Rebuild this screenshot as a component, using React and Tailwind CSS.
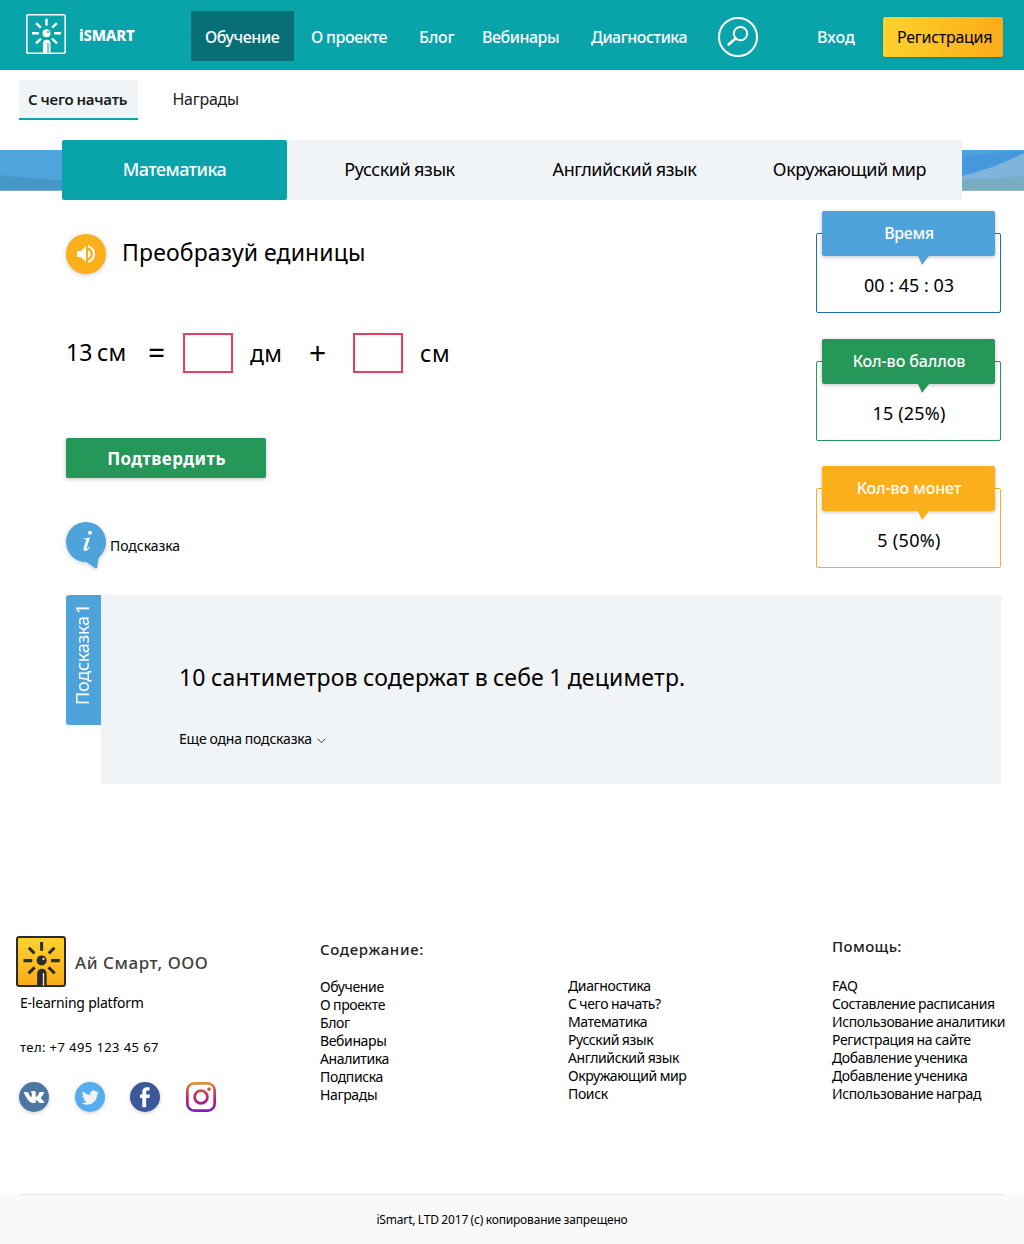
import React from 'react';

const navLinks = [
  { label: 'О проекте', cls: 'w-[108px] tracking-[-0.4px]' },
  { label: 'Блог', cls: 'w-[63px] tracking-[-0.23px]' },
  { label: 'Вебинары', cls: 'w-[109px] tracking-[-0.47px]' },
  { label: 'Диагностика', cls: 'w-[127px] tracking-[-0.5px]' },
];

const subjects = ['Русский язык', 'Английский язык', 'Окружающий мир'];

const stats = [
  {
    title: 'Время',
    value: '00 : 45 : 03',
    border: 'border-[#1c70a8]',
    bg: 'bg-[#4fa3db]',
    tail: 'border-t-[#4fa3db]',
    gap: 'mb-[26px]',
    track: 'tracking-[-0.35px]',
    valueTrack: '',
  },
  {
    title: 'Кол-во баллов',
    value: '15 (25%)',
    border: 'border-[#259759]',
    bg: 'bg-[#259759]',
    tail: 'border-t-[#259759]',
    gap: 'mb-[25px]',
    track: 'tracking-[-0.1px]',
    valueTrack: 'tracking-[0.18px]',
  },
  {
    title: 'Кол-во монет',
    value: '5 (50%)',
    border: 'border-[#fbaf1a]',
    bg: 'bg-[#fbaf1a]',
    tail: 'border-t-[#fbaf1a]',
    gap: '',
    track: 'tracking-[-0.12px]',
    valueTrack: 'tracking-[0.3px]',
  },
];

const contentLinks = ['Обучение', 'О проекте', 'Блог', 'Вебинары', 'Аналитика', 'Подписка', 'Награды'];
const moreLinks = ['Диагностика', 'С чего начать?', 'Математика', 'Русский язык', 'Английский язык', 'Окружающий мир', 'Поиск'];
const helpLinks = [
  'FAQ',
  'Составление расписания',
  'Использование аналитики',
  'Регистрация на сайте',
  'Добавление ученика',
  'Добавление ученика',
  'Использование наград',
];

function LogoMark({ className, stroke, fill, shine }) {
  return (
    <svg className={className} viewBox="0 0 40 40" fill="none" preserveAspectRatio="none">
      <defs>
        <linearGradient id="logoFill" x1="0" y1="0" x2="0" y2="1">
          <stop offset="0" stopColor="#fdd32b" />
          <stop offset="1" stopColor="#fbab18" />
        </linearGradient>
      </defs>
      <rect x="0.8" y="0.8" width="38.4" height="38.4" rx="1.8" fill={fill} stroke={stroke} strokeWidth="1.6" />
      <path
        d="M20.5 4.8v6.7M6 19.3h7M28 19.3h7M10.2 9.2l4.6 4.5M30.8 9.2l-4.6 4.5M10 29.3l5-4.6M31 29.3l-5-4.6"
        stroke={stroke}
        strokeWidth="2.4"
      />
      <circle cx="20.5" cy="19.2" r="4" fill={stroke} />
      <circle cx="22" cy="18" r="0.9" fill={shine} />
      <path d="M16.9 39V29.5a3.8 3.8 0 0 1 7.6 0V39z" fill={stroke} />
      <path d="M22 29v10" stroke={shine} strokeWidth="1.1" />
    </svg>
  );
}

function Header() {
  return (
    <header className="flex h-[70px] bg-[#09a3aa] text-base font-medium text-white">
      <LogoMark className="mt-[14px] ml-[26px] size-10 shrink-0" stroke="#ffffff" fill="none" shine="#09a3aa" />
      <span className="ml-[13px] w-[112px] text-[15px] leading-[70px] font-extrabold tracking-[-0.2px]">iSMART</span>
      <a className="mt-[11px] h-[50px] w-[103px] bg-[#076f75] pl-[14px] leading-[53px] tracking-[-0.44px]">Обучение</a>
      <nav className="ml-[17px] flex leading-[75px] [word-spacing:-0.5px]">
        {navLinks.map((l) => (
          <a key={l.label} className={l.cls}>
            {l.label}
          </a>
        ))}
      </nav>
      <button className="mt-[17px] size-10 shrink-0">
        <svg viewBox="0 0 40 40" fill="none" stroke="#ffffff">
          <circle cx="20" cy="20" r="19" strokeWidth="2" />
          <circle cx="22.5" cy="16.6" r="6.7" strokeWidth="2" />
          <path d="M17.6 21.5l-7 6" strokeWidth="2.6" strokeLinecap="round" />
        </svg>
      </button>
      <a className="ml-[59px] w-[66px] leading-[75px]">Вход</a>
      <button className="mt-[17px] h-10 w-[120px] rounded-[2px] bg-linear-to-r from-[#fcd22b] to-[#fbac18] pl-[14px] text-left leading-[40px] font-normal tracking-[-0.27px] text-black shadow-[0_1px_3px_rgba(0,0,0,0.2)]">
        <span className="block h-[39px] leading-[39px]">Регистрация</span>
      </button>
    </header>
  );
}

function SubNav() {
  return (
    <div className="flex h-[70px] pt-[10px] text-[#1c1c1c]">
      <a className="ml-[19px] h-10 w-[119px] border-b-2 border-[#09a3aa] bg-[#f0f4f7] pl-[9px] text-[15px] leading-[38px] font-semibold tracking-[-0.25px] [word-spacing:-0.5px]">
        С чего начать
      </a>
      <a className="ml-[34.5px] text-base leading-[39px] tracking-[-0.27px]">Награды</a>
    </div>
  );
}

function SubjectTabs() {
  return (
    <div className="flex">
      <svg className="mt-[10px] h-[41px] w-[62px]" viewBox="0 0 62 41" preserveAspectRatio="none">
        <rect width="62" height="41" fill="#4fa4dc" />
        <path d="M0 25q30 4 62 5v11H0z" fill="#4597c8" />
        <rect y="40" width="62" height="1" fill="#86aebf" />
      </svg>
      <div className="grid h-[60px] w-[900px] grid-cols-4 rounded-[2px] bg-[#f0f4f7] text-center text-lg leading-[59px] tracking-[-0.42px] text-black [word-spacing:-0.5px]">
        <a className="rounded-[2px] bg-[#09a3aa] font-medium tracking-[-0.58px] text-white">Математика</a>
        {subjects.map((s) => (
          <a key={s}>{s}</a>
        ))}
      </div>
      <svg className="mt-[10px] h-[41px] w-[62px]" viewBox="0 0 62 41" preserveAspectRatio="none">
        <rect width="62" height="41" fill="#4698dd" />
        <path d="M0 0h62v1Q28 3 0 7z" fill="#4da2dc" />
        <path d="M0 26Q34 18 62 3v38H0z" fill="#80b4dd" />
        <path d="M0 29Q32 30 62 25v16H0z" fill="#79adc2" />
        <rect y="40" width="62" height="1" fill="#9fbcba" />
      </svg>
    </div>
  );
}

function StatCard({ title, value, border, bg, tail, gap, track, valueTrack }) {
  return (
    <div className={`flex w-[185px] flex-col items-center ${gap}`}>
      <div
        className={`relative z-10 h-[45px] w-[173px] rounded-[2px] pl-px text-center text-base leading-[45px] font-medium text-white shadow-[0_1px_4px_rgba(0,0,0,0.25)] ${bg} ${track}`}
      >
        {title}
        <i className={`absolute top-full left-[96px] border-t-[9px] border-r-[7px] border-l-[4px] border-x-transparent ${tail}`} />
      </div>
      <div
        className={`-mt-[23px] h-20 w-full rounded-[2px] border pt-[28px] pl-px text-center text-lg leading-[46px] text-black ${border} ${valueTrack}`}
      >
        {value}
      </div>
    </div>
  );
}

function Task() {
  return (
    <section className="flex h-[395px] justify-between pr-[23px] pl-[66px] text-black">
      <div>
        <div className="flex pt-[34px]">
          <button className="grid size-10 place-items-center rounded-full bg-[#fbaf1a] shadow-[0_1px_5px_rgba(0,0,0,0.2)]">
            <svg className="size-6" viewBox="0 0 24 24" fill="#ffffff">
              <path d="M3 9v6h4l5 5V4L7 9H3zm13.5 3c0-1.77-1.02-3.29-2.5-4.03v8.05c1.48-.73 2.5-2.25 2.5-4.02zM14 3.23v2.06c2.89.86 5 3.54 5 6.71s-2.11 5.85-5 6.71v2.06c4.01-.91 7-4.49 7-8.77s-2.99-7.86-7-8.77z" />
            </svg>
          </button>
          <h1 className="ml-[16px] text-[23px] leading-[36px] tracking-[0.16px] [word-spacing:-0.5px]">Преобразуй единицы</h1>
        </div>
        <div className="mt-[59px] flex h-10 text-[23px] leading-[41px] tracking-[0.3px]">
          <span className="w-[82px] tracking-[0.1px] leading-[38px] [word-spacing:-1.5px]">13 см</span>
          <span className="w-[35px] text-[30px] leading-[39px]">=</span>
          <input className="h-10 w-[50px] border-2 border-[#e5405d]" />
          <span className="ml-[17px] w-[59px]">дм</span>
          <span className="w-[44px] text-[30px] leading-[40px]">+</span>
          <input className="h-10 w-[50px] border-2 border-[#e5405d]" />
          <span className="ml-[17px] tracking-[0.6px]">см</span>
        </div>
        <button className="mt-[65px] block h-10 w-[200px] rounded-[2px] bg-[#259759] pl-px text-[17px] leading-[41px] font-bold tracking-[0.42px] text-white shadow-[0_1px_4px_rgba(0,0,0,0.25)]">
          Подтвердить
        </button>
        <button className="mt-[44px] flex text-sm leading-[47px]">
          <svg className="h-[48px] w-10 drop-shadow-[0_1px_2px_rgba(0,0,0,0.2)]" viewBox="0 0 40 48" fill="#4fa3db">
            <circle cx="20" cy="20" r="20" />
            <path d="M19 39.6c4 1 6.5 4.6 9.8 6.4 1.5.8 2.3.2 2.5-1.2.4-3 .4-6 1.7-9.8z" />
            <g fill="#ffffff">
              <circle cx="24" cy="10.7" r="2" />
              <path d="M17.500 16.600l6.400-1.200-3.200 10.600c-.3 1.100.1 1.300.8.800.7-.5 1.300-1.200 1.900-2l.7.5c-1.300 2.100-3 3.600-4.800 3.600-1.700 0-2.100-1.200-1.600-2.900l2.500-8.200c.1-.5-.2-.7-.8-.7l-1.800.1z" />
            </g>
          </svg>
          <span className="ml-[4px] tracking-[-0.05px]">Подсказка</span>
        </button>
      </div>
      <aside className="pt-[11px]">
        {stats.map((s) => (
          <StatCard key={s.title} {...s} />
        ))}
      </aside>
    </section>
  );
}

function Hint() {
  return (
    <section className="flex pl-[66px] text-black">
      <div className="flex h-[130px] w-[35px] rounded-l-[3px] bg-[#4fa3db] text-white">
        <span className="h-full rotate-180 pt-[20px] text-lg leading-[32px] tracking-[-0.2px] [word-spacing:-2.5px] [writing-mode:vertical-rl]">
          Подсказка 1
        </span>
      </div>
      <div className="h-[189px] w-[900px] rounded-r-[2px] rounded-bl-[2px] bg-[#f0f4f7] pl-[78px]">
        <p className="mt-[64px] text-[23px] leading-[36px] tracking-[0.2px] [word-spacing:-1px]">
          10 сантиметров содержат в себе 1 дециметр.
        </p>
        <a className="mt-[33px] flex text-sm leading-[21px] tracking-[-0.18px] [word-spacing:-0.5px]">
          Еще одна подсказка
          <svg className="mt-[10px] ml-[5px] h-[6px] w-[9px]" viewBox="0 0 9 6" fill="none" stroke="#333333" strokeWidth="1">
            <path d="M0.5 0.7l4 4 4-4" />
          </svg>
        </a>
      </div>
    </section>
  );
}

function Socials() {
  return (
    <div className="mt-[26px] ml-[3px] flex">
      <svg className="size-[30px] drop-shadow-[0_1px_2px_rgba(0,0,0,0.2)]" viewBox="0 0 30 30">
        <circle cx="15" cy="15" r="15" fill="#4d76a1" />
        <path
          transform="translate(4.8 4.8) scale(0.85)"
          fill="#ffffff"
          d="M13.162 18.994c.609 0 .858-.406.851-.915-.031-1.917.714-2.949 2.059-1.604 1.488 1.488 1.796 2.519 3.603 2.519h3.2c.808 0 1.126-.26 1.126-.668 0-.863-1.421-2.386-2.625-3.504-1.686-1.565-1.765-1.602-.313-3.486 1.801-2.339 4.157-5.336 2.073-5.336h-3.981c-.772 0-.828.435-1.103 1.083-.995 2.347-2.886 5.387-3.604 4.922-.751-.485-.407-2.406-.35-5.261.015-.754.011-1.271-1.141-1.539-.629-.145-1.241-.205-1.809-.205-2.273 0-3.841.953-2.95 1.119 1.571.293 1.42 3.692 1.054 5.16-.638 2.556-3.036-2.024-4.035-4.305-.241-.548-.315-.974-1.175-.974h-3.255c-.492 0-.787.16-.787.516 0 .602 2.96 6.72 5.786 9.77 2.756 2.975 5.48 2.708 7.376 2.708z"
        />
      </svg>
      <svg className="ml-[26px] size-[30px] drop-shadow-[0_1px_2px_rgba(0,0,0,0.2)]" viewBox="0 0 30 30">
        <circle cx="15" cy="15" r="15" fill="#55acee" />
        <path
          transform="translate(6.7 7) scale(0.72)"
          fill="#f1f2f2"
          d="M23.954 4.569c-.885.389-1.83.654-2.825.775 1.014-.611 1.794-1.574 2.163-2.723-.951.555-2.005.959-3.127 1.184-.896-.959-2.173-1.559-3.591-1.559-2.717 0-4.92 2.203-4.92 4.917 0 .39.045.765.127 1.124C7.691 8.094 4.066 6.13 1.64 3.161c-.427.722-.666 1.561-.666 2.475 0 1.71.87 3.213 2.188 4.096-.807-.026-1.566-.248-2.228-.616v.061c0 2.385 1.693 4.374 3.946 4.827-.413.111-.849.171-1.296.171-.314 0-.615-.03-.916-.086.631 1.953 2.445 3.377 4.604 3.417-1.68 1.319-3.809 2.105-6.102 2.105-.39 0-.779-.023-1.17-.067 2.189 1.394 4.768 2.209 7.557 2.209 9.054 0 13.999-7.496 13.999-13.986 0-.209 0-.42-.015-.63.961-.689 1.8-1.56 2.46-2.548z"
        />
      </svg>
      <svg className="ml-[25px] size-[30px] drop-shadow-[0_1px_2px_rgba(0,0,0,0.2)]" viewBox="0 0 30 30">
        <circle cx="15" cy="15" r="15" fill="#3b5998" />
        <path
          fill="#ffffff"
          d="M16.2 25.300v-9.200h3.200l.5-3.700h-3.700V10.300c0-1.100.4-1.700 1.800-1.700h1.500V5.500c-.4-.1-1.400-.2-2.500-.2-2.900 0-4.700 1.600-4.700 4.600v2.500H10v3.700h2.300v9.200z"
        />
      </svg>
      <svg className="ml-[26px] size-[30px]" viewBox="0 0 30 30" fill="none">
        <defs>
          <linearGradient id="insta" gradientUnits="userSpaceOnUse" x1="0" y1="0" x2="0" y2="30">
            <stop offset="0" stopColor="#e09b3d" />
            <stop offset="0.3" stopColor="#c74c4d" />
            <stop offset="0.6" stopColor="#c21975" />
            <stop offset="1" stopColor="#7024c4" />
          </linearGradient>
        </defs>
        <rect x="1.35" y="1.35" width="27.3" height="27.3" rx="7" stroke="url(#insta)" strokeWidth="2.7" />
        <circle cx="15" cy="15" r="6.4" stroke="url(#insta)" strokeWidth="2.7" />
        <circle cx="23" cy="7.1" r="1.85" fill="url(#insta)" />
      </svg>
    </div>
  );
}

function Footer() {
  return (
    <footer className="mt-[152px] text-sm text-black">
      <div className="flex h-[258px] leading-[18px] tracking-[-0.37px] [word-spacing:-0.5px]">
        <div className="ml-[16px] w-[304px]">
          <div className="flex h-[51px]">
            <LogoMark className="h-[51px] w-[50px]" stroke="#2b2b2b" fill="url(#logoFill)" shine="#fde9b0" />
            <span className="ml-[9px] text-[17px] leading-[54px] font-medium tracking-[0.56px] text-[#404040] [word-spacing:0px]">
              Ай Смарт, ООО
            </span>
          </div>
          <p className="mt-[7px] pl-[4px] tracking-[-0.22px] [word-spacing:0px]">E-learning platform</p>
          <p className="mt-[26px] pl-[4px] text-[13px] tracking-[0.41px] [word-spacing:0px]">тел: +7 495 123 45 67</p>
          <Socials />
        </div>
        <div className="w-[248px]">
          <h2 className="mt-[4px] mb-[20px] text-[15px] font-medium tracking-[0.67px] text-[#1c1c1c]">Содержание:</h2>
          {contentLinks.map((l) => (
            <a key={l} className="block">
              {l}
            </a>
          ))}
        </div>
        <div className="mt-[41px] w-[264px]">
          {moreLinks.map((l) => (
            <a key={l} className="block">
              {l}
            </a>
          ))}
        </div>
        <div>
          <h2 className="mt-px mb-[22px] text-[15px] font-medium tracking-[0.4px] text-[#1c1c1c]">Помощь:</h2>
          {helpLinks.map((l, i) => (
            <a key={i} className="block whitespace-nowrap">
              {l}
            </a>
          ))}
        </div>
      </div>
      <div className="mx-5 h-px bg-[#e6e6e6]" />
      <p className="h-[49px] bg-[#f9f9f9] pr-[20px] text-center text-xs leading-[49px] tracking-[-0.18px] [word-spacing:-0.4px]">
        iSmart, LTD 2017 (с) копирование запрещено
      </p>
    </footer>
  );
}

export default function App() {
  return (
    <div className="w-[1024px] bg-white font-['Noto_Sans','Open_Sans',sans-serif]">
      <Header />
      <SubNav />
      <SubjectTabs />
      <Task />
      <Hint />
      <Footer />
    </div>
  );
}
